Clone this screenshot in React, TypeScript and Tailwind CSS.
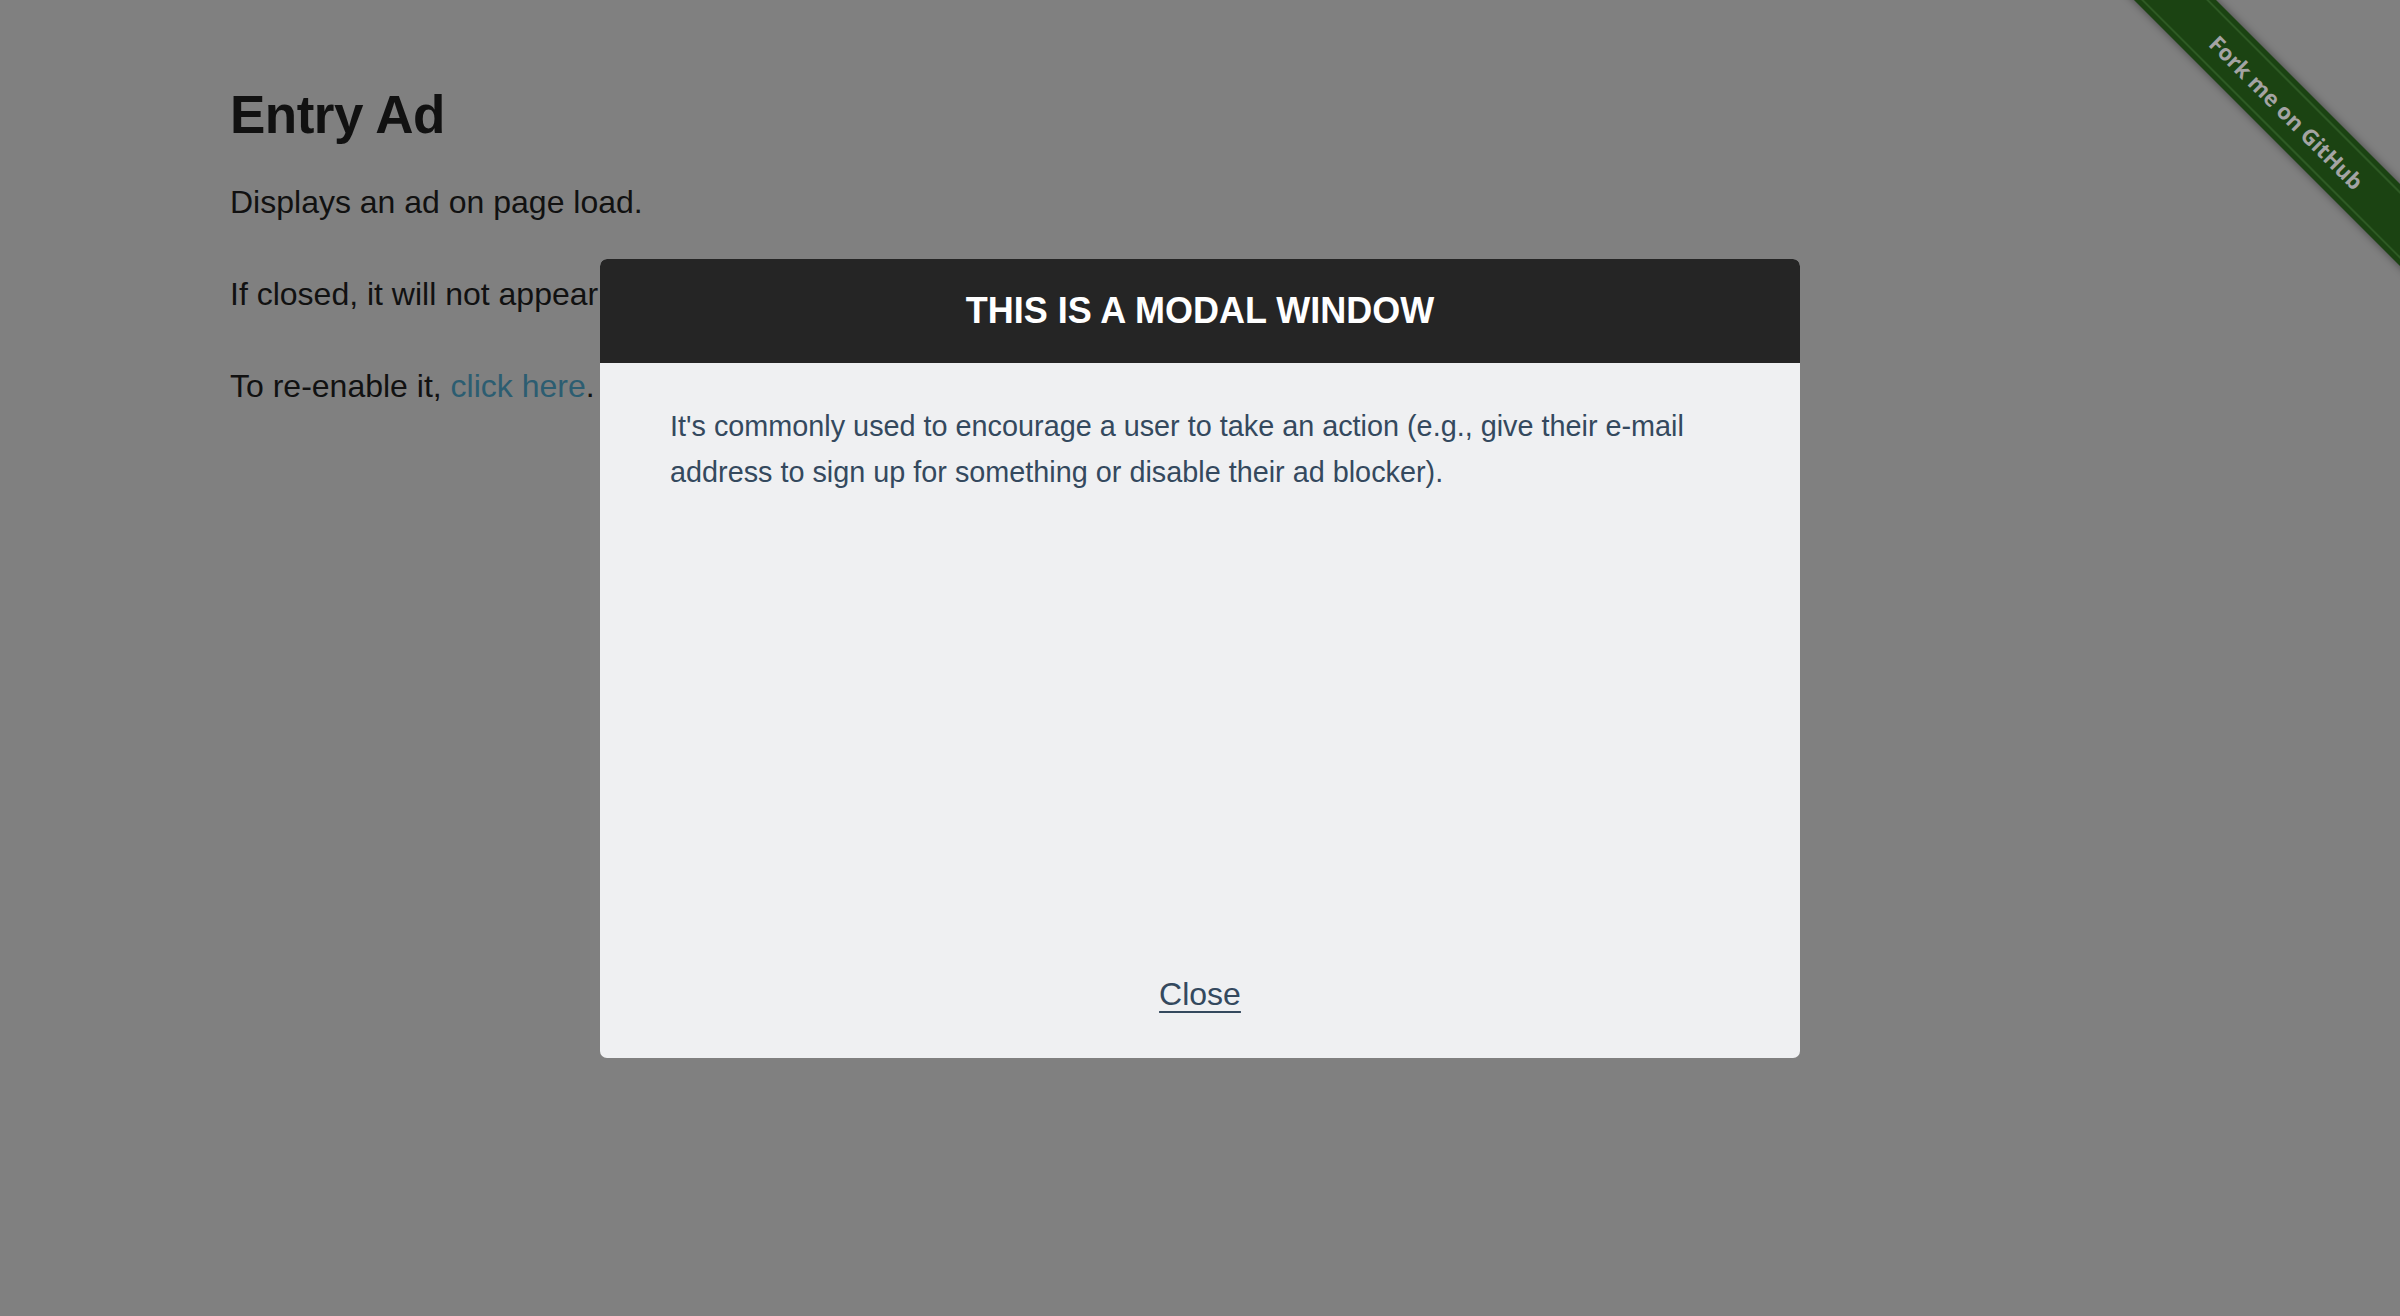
// Entry Ad page with the modal open. The page behind is drawn already dimmed
// (grey backdrop, darkened text), the modal and ribbon sit over it.

const PAGE_FONT = "font-['Liberation_Sans','Helvetica_Neue',Arial,sans-serif]";

function ForkRibbon() {
  return (
    <div className="absolute top-0 right-0 w-[298px] h-[298px] overflow-hidden pointer-events-none">
      {/* band: centre line runs through (185,112) of this box, turned 45deg */}
      <div className="absolute left-[-35px] top-[83px] w-[440px] h-[58px] rotate-45 bg-[#1b4312] shadow-[0_0_8px_rgba(0,0,0,0.45)] flex items-center">
        <div className="w-full h-[48px] border-y-2 border-[#2e5a24] flex items-center justify-center">
          <span className="font-['Open_Sans',sans-serif] font-bold text-[22px] leading-none text-[#a4a4a4]">
            Fork me on GitHub
          </span>
        </div>
      </div>
    </div>
  );
}

function Modal() {
  return (
    <div className="absolute left-[600px] top-[259px] w-[1200px] h-[799px] rounded-[7px] bg-[#eff0f2] overflow-hidden flex flex-col">
      <div className="h-[104px] shrink-0 bg-[#252525] text-center">
        <h3 className="text-[36px] leading-[104px] font-bold text-white">
          THIS IS A MODAL WINDOW
        </h3>
      </div>
      <div className="flex-1 px-[70px] pt-[40px]">
        <p className="text-[28.8px] leading-[46px] text-[#34495e]">
          It's commonly used to encourage a user to take an action (e.g., give
          their e-mail address to sign up for something or disable their ad
          blocker).
        </p>
      </div>
      <div className="pb-[38px] text-center">
        <span className="text-[32px] leading-[51px] text-[#34495e] underline decoration-2 underline-offset-[6px]">
          Close
        </span>
      </div>
    </div>
  );
}

export default function App() {
  return (
    <div className={`relative min-h-screen w-full overflow-hidden bg-[#808080] ${PAGE_FONT}`}>
      <div className="pl-[230px] pt-[83px]">
        <h3 className="text-[53px] leading-[64px] font-bold text-[#111111] tracking-[-0.5px]">
          Entry Ad
        </h3>
        <div className="mt-[30px] flex flex-col gap-[41px] text-[32px] leading-[51px] text-[#111111]">
          <p>Displays an ad on page load.</p>
          <p>
            If closed, it will not appear on subsequent page loads.
          </p>
          <p>
            To re-enable it, <span className="text-[#2c5d71]">click here</span>.
          </p>
        </div>
      </div>
      <Modal />
      <ForkRibbon />
    </div>
  );
}
